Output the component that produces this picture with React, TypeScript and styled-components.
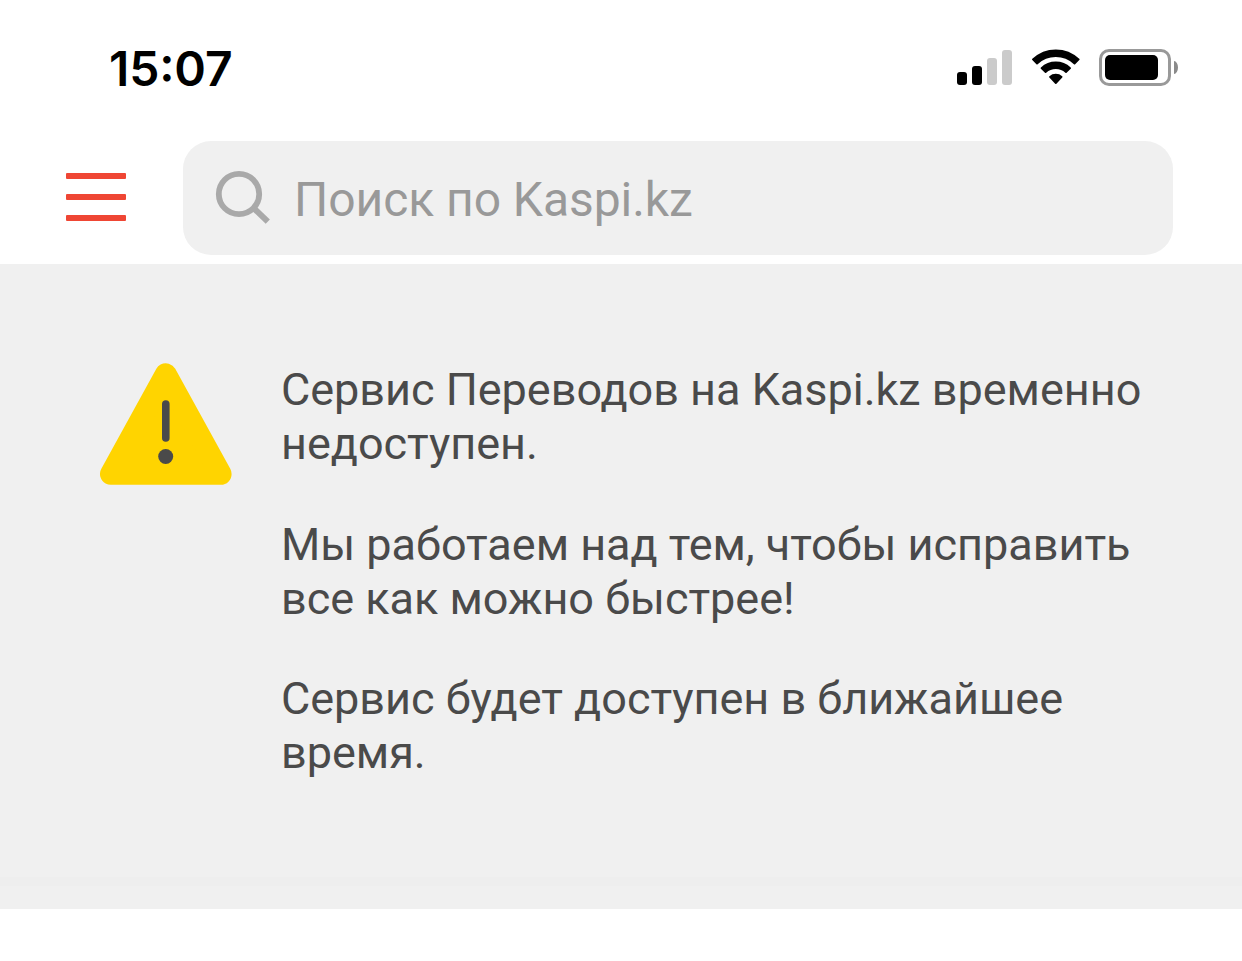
import React from 'react'
import styled, { createGlobalStyle } from 'styled-components'

const theme = {
    colors: {
        primary: '#ef4634',
        surface: '#f0f0f0',
        font: '#4a4a4a',
        placeholder: '#999999',
        icon: '#a9a9a9',
        warning: '#ffd400',
    },
}

const messages = [
    'Сервис Переводов на Kaspi.kz временно недоступен.',
    'Мы работаем над тем, чтобы исправить все как можно быстрее!',
    'Сервис будет доступен в ближайшее время.',
]

const signalBars = [
    { height: 13, active: true },
    { height: 19, active: true },
    { height: 27, active: false },
    { height: 35, active: false },
]

const WifiIcon = () => (
    <svg width="48" height="36" viewBox="0 0 48 36" stroke="#000" strokeWidth="1.8" strokeLinejoin="round">
        <path d="M0.95 10.4 A33.2 33.2 0 0 1 46.65 10.4 L42.55 14.5 A27.5 27.5 0 0 0 5.05 14.5 Z"/>
        <path d="M9.5 19.1 A20.9 20.9 0 0 1 38.1 19.1 L34 23.1 A15 15 0 0 0 13.6 23.1 Z"/>
        <path d="M18 28 A8.6 8.6 0 0 1 29.6 28 L23.8 34.1 Z"/>
    </svg>
)

const SearchIcon = () => (
    <svg width="56" height="56" viewBox="0 0 56 56" fill="none" stroke={theme.colors.icon}>
        <circle cx="24" cy="24" r="20.2" strokeWidth="5.8"/>
        <path d="M38.5 38 L52.8 51.6" strokeWidth="6"/>
    </svg>
)

const WarningIcon = () => (
    <svg width="132" height="122" viewBox="0 0 132 122">
        <path
            d="M65.8 11 L10.8 111 H120.8 Z"
            fill={theme.colors.warning}
            stroke={theme.colors.warning}
            strokeWidth="21.6"
            strokeLinejoin="round"
        />
        <rect x="62" y="37.3" width="7.6" height="41.5" rx="3.8" fill={theme.colors.font}/>
        <circle cx="65.7" cy="93.5" r="7.5" fill={theme.colors.font}/>
    </svg>
)

const App = () => {
    return (
        <Page>
            <GlobalStyle/>
            <StatusBar>
                <Time>15:07</Time>
                <Indicators>
                    <Signal>
                        {signalBars.map((bar) => (
                            <SignalBar key={bar.height} $height={bar.height} $active={bar.active}/>
                        ))}
                    </Signal>
                    <WifiIcon/>
                    <Battery>
                        <BatteryBody>
                            <BatteryLevel/>
                        </BatteryBody>
                        <BatteryCap/>
                    </Battery>
                </Indicators>
            </StatusBar>
            <Header>
                <MenuButton aria-label="Меню">
                    <MenuLine/>
                    <MenuLine/>
                    <MenuLine/>
                </MenuButton>
                <SearchField>
                    <SearchIcon/>
                    <Placeholder>Поиск по Kaspi.kz</Placeholder>
                </SearchField>
            </Header>
            <Notice>
                <WarningIcon/>
                <Messages>
                    {messages.map((message) => (
                        <Message key={message}>{message}</Message>
                    ))}
                </Messages>
            </Notice>
            <Divider/>
        </Page>
    )
}

export default App

const GlobalStyle = createGlobalStyle`
    * {
        box-sizing: border-box;
    }

    body {
        margin: 0;
        background: #fff;
        font-family: Roboto, sans-serif;
    }

    svg {
        display: block;
        flex-shrink: 0;
    }
`

const Page = styled.div`
    width: 1242px;
    height: 961px;
    overflow: hidden;
    background: #fff;
`

const StatusBar = styled.div`
    display: flex;
    justify-content: space-between;
    align-items: flex-start;
    height: 141px;
    padding: 49px 64px 0 109px;
`

const Time = styled.span`
    padding-top: 1px;
    font-family: Inter, sans-serif;
    font-weight: 600;
    font-size: 48px;
    line-height: 37px;
    letter-spacing: -0.15px;
    font-feature-settings: 'case' 1;
    color: #000;
`

const Indicators = styled.div`
    display: flex;
    align-items: flex-start;
`

const Signal = styled.div`
    display: flex;
    align-items: flex-end;
    gap: 5px;
    height: 36px;
    margin-right: 20px;
`

const SignalBar = styled.span<{ $height: number; $active: boolean }>`
    width: 10px;
    height: ${(props) => props.$height}px;
    border-radius: 3px;
    background: ${(props) => (props.$active ? '#000' : '#cbcbcb')};
`

const Battery = styled.div`
    display: flex;
    align-items: center;
    margin-left: 19px;
`

const BatteryBody = styled.div`
    width: 72px;
    height: 37px;
    padding: 3px;
    border: 3px solid #999;
    border-radius: 10px;
`

const BatteryLevel = styled.div`
    width: 53px;
    height: 25px;
    border-radius: 5px;
    background: #000;
`

const BatteryCap = styled.span`
    width: 4px;
    height: 13px;
    margin-left: 3px;
    border-radius: 0 4px 4px 0 / 0 6.5px 6.5px 0;
    background: #8a8a8a;
`

const Header = styled.header`
    display: flex;
    align-items: center;
    height: 123px;
    padding: 0 69px 9px 66px;
`

const MenuButton = styled.button`
    display: flex;
    flex-direction: column;
    gap: 15px;
    width: 60px;
    margin: 0 57px 2px 0;
    padding: 0;
    border: none;
    background: none;
`

const MenuLine = styled.span`
    width: 100%;
    height: 6px;
    border-radius: 1px;
    background: ${theme.colors.primary};
`

const SearchField = styled.div`
    display: flex;
    align-items: center;
    flex: 1;
    height: 114px;
    padding-left: 32px;
    border-radius: 28px;
    background: ${theme.colors.surface};
`

const Placeholder = styled.span`
    padding: 4px 0 0 23px;
    font-size: 48px;
    line-height: 56px;
    letter-spacing: -0.05px;
    color: ${theme.colors.placeholder};
`

const Notice = styled.section`
    display: flex;
    align-items: flex-start;
    height: 613px;
    padding: 99px 60px 0 100px;
    background: ${theme.colors.surface};
`

const Messages = styled.div`
    flex: 1;
    margin-left: 49px;
`

const Message = styled.p`
    margin: 0 0 46.5px;
    font-size: 45px;
    line-height: 54px;
    letter-spacing: -0.02px;
    color: ${theme.colors.font};
`

const Divider = styled.div`
    height: 32px;
    border-top: 9px solid #eeeeee;
    background: ${theme.colors.surface};
`
